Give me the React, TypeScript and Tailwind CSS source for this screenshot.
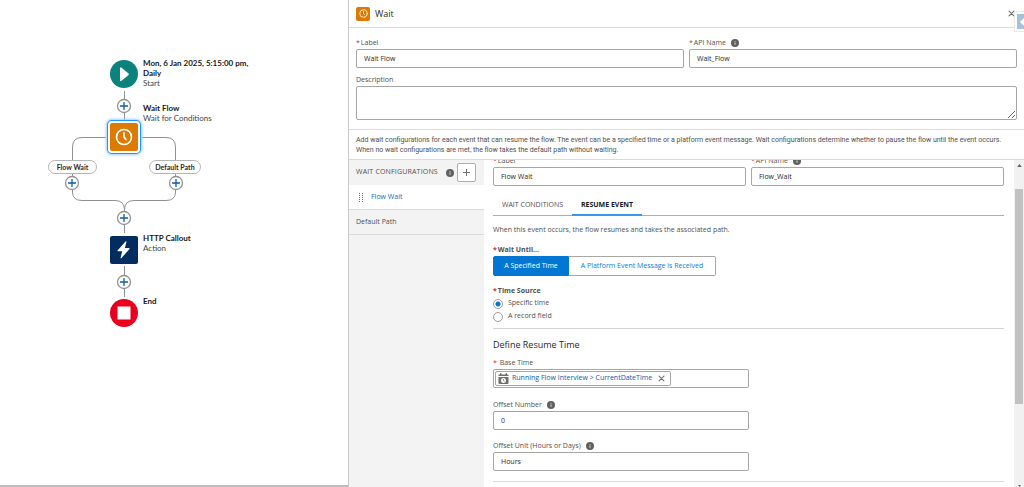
import { useState } from 'react'

interface FieldProps {
  id: string;
  label: string;
  value: string;
  required?: boolean;
  info?: boolean;
  className?: string;
}

const InfoIcon = () => (
  <svg viewBox="0 0 16 16" className="h-2 w-2 shrink-0" aria-hidden="true">
    <circle cx="8" cy="8" r="8" fill="#62605e" />
    <path d="M7.200 3.800h1.600v1.600H7.200zM7.200 7h1.600v4.600H7.200z" fill="#fff" />
  </svg>
)

const ClockIcon = ({ className }: { className: string }) => (
  <svg viewBox="0 0 24 24" className={className} fill="none" stroke="#fff" strokeWidth="2.2" strokeLinecap="round" strokeLinejoin="round" aria-hidden="true">
    <circle cx="12" cy="12" r="10" />
    <path d="M12 6.5V12l2.6 3.4" />
  </svg>
)

const CalendarIcon = () => (
  <svg viewBox="0 0 22 22" className="h-[11px] w-[11px] shrink-0" aria-hidden="true">
    <path d="M1 6V4.500q0-1.500 1.500-1.500H4V1.500Q4 0 5.500 0T7 1.500V3h8V1.500Q15 0 16.500 0T18 1.500V3h1.500Q21 3 21 4.500V6z" fill="#706e6b" />
    <path d="M1 8h20v12q0 2-2 2H3q-2 0-2-2z" fill="#706e6b" />
    <circle cx="11" cy="15" r="5" fill="#fff" />
    <path d="M11 12v3.200l2 1.400" stroke="#706e6b" strokeWidth="1.600" fill="none" />
  </svg>
)

const CloseIcon = ({ className }: { className: string }) => (
  <svg viewBox="0 0 10 10" className={className} stroke="#706e6b" strokeWidth="1.5" strokeLinecap="round" aria-hidden="true">
    <path d="M1.500 1.500l7 7M8.500 1.500l-7 7" />
  </svg>
)

const Required = () => <span className="mr-px text-[#c23934]">*</span>

const Field = ({ id, label, value, required, info, className = '' }: FieldProps) => (
  <div className={className}>
    <div className="flex h-3 items-center gap-[5px]">
      <label htmlFor={id} className="leading-3 text-[#514f4d]">
        {required && <Required />}
        {label}
      </label>
      {info && <InfoIcon />}
    </div>
    <input id={id} defaultValue={value} className="block h-[19px] w-full rounded-xs border border-[#a9a7a5] bg-white px-[7px] text-[#2b2826]" />
  </div>
)

const PLUS_NODES = [
  [124, 106],
  [72, 183],
  [176, 183],
  [124, 218],
  [124, 282],
]

const Canvas = () => (
  <section aria-label="Flow" className="relative w-[348px] shrink-0 overflow-hidden border-b-2 border-[#bdbdbd] bg-white font-['Lato',sans-serif]">
    <svg className="absolute top-0 left-0" width="260" height="340" fill="none" aria-hidden="true">
      <g stroke="#919191" strokeWidth="1">
        <path d="M124.500 91v32M106 137.500H82q-9.500 0-9.500 9.500V192q0 8.500 9.500 8.500H115q9.500 0 9.500 9.500V233" />
        <path d="M142 137.500h24q9.500 0 9.500 9.500V192q0 8.500-9.500 8.500H134q-9.500 0-9.500 9.500" />
        <path d="M124.500 266v31" />
      </g>
      {PLUS_NODES.map(([x, y]) => (
        <g key={`${x}-${y}`}>
          <circle cx={x} cy={y} r="6.500" fill="#fff" stroke="#919191" strokeWidth="1.300" />
          <path d={`M${x - 4} ${y}h8M${x} ${y - 4}v8`} stroke="#0b5cab" strokeWidth="1.300" />
        </g>
      ))}
      <circle cx="124" cy="74" r="14" fill="#0b827c" />
      <path d="M120 68v12.600q.3 1.100 1.300.5l7.200-6.100q.7-.7 0-1.400l-7.200-6.100q-1-.5-1.300.5z" fill="#fff" />
      <rect x="110" y="236" width="28" height="28" rx="2" fill="#032d60" />
      <path d="M125.500 241.500l-8 9q-.3.700.5.800h4.200l-1.700 6.600q.1.700.8.300l8.200-9.200q.4-.8-.5-.9h-4.100l1.600-6.300q-.2-.8-1-.3z" fill="#fff" />
      <circle cx="124" cy="313" r="14" fill="#ea001e" />
      <rect x="117.500" y="306.500" width="13" height="13" fill="#fff" />
    </svg>
    <button type="button" aria-label="Wait Flow" className="absolute top-[121px] left-[108px] flex h-8 w-8 items-center justify-center rounded-sm border-2 border-white bg-[#dd7a01] shadow-[0_0_0_1px_#1b96ff,0_0_3px_2px_#9ccdf8]">
      <ClockIcon className="h-[18px] w-[18px]" />
    </button>
    <div className="absolute top-[58px] left-[143px] w-28 text-[8px] leading-[10px]">
      <p className="font-bold text-[#181818]">Mon, 6 Jan 2025, 5:15:00 pm, Daily</p>
      <p className="text-[#444]">Start</p>
    </div>
    <div className="absolute top-[103px] left-[143px] text-[8px] leading-[10px]">
      <p className="font-bold text-[#181818]">Wait Flow</p>
      <p className="text-[#444]">Wait for Conditions</p>
    </div>
    <div className="absolute top-[233px] left-[143px] text-[8px] leading-[10px]">
      <p className="font-bold text-[#181818]">HTTP Callout</p>
      <p className="text-[#444]">Action</p>
    </div>
    <p className="absolute top-[296px] left-[143px] text-[8px] leading-[10px] font-bold text-[#181818]">End</p>
    <span className="absolute top-[160px] left-[48px] flex h-3.5 w-[49px] items-center justify-center rounded-full border border-[#b5b5b5] bg-white text-[7px] font-bold text-[#2b2826]">Flow Wait</span>
    <span className="absolute top-[160px] left-[149px] flex h-3.5 w-[52px] items-center justify-center rounded-full border border-[#b5b5b5] bg-white text-[7px] font-bold whitespace-nowrap text-[#2b2826]">Default Path</span>
  </section>
)

const ConfigList = () => (
  <nav aria-label="Wait configurations" className="w-[135px] shrink-0 bg-[#f3f3f3]">
    <div className="flex h-[25px] items-center gap-[3px] pl-[7px]">
      <h2 className="w-[87px] tracking-wide whitespace-nowrap uppercase">Wait Configurations</h2>
      <InfoIcon />
      <button type="button" aria-label="Add wait configuration" className="flex h-[19px] w-[19px] items-center justify-center rounded-xs border border-[#b0adab] bg-white">
        <svg viewBox="0 0 7 7" className="h-[7px] w-[7px]" stroke="#706e6b" aria-hidden="true">
          <path d="M3.500 0v7M0 3.500h7" />
        </svg>
      </button>
    </div>
    <a href="#flow-wait" className="flex h-[25px] items-center border-b border-[#dddbda] bg-white pl-2.5 text-[#0b6cbd]">
      <svg viewBox="0 0 5 9" className="mr-[7px] h-[9px] w-[5px]" fill="#706e6b" aria-hidden="true">
        {[0, 2, 4, 6, 8].map((y) => (
          <g key={y}>
            <rect x="0" y={y} width="1" height="1" />
            <rect x="3" y={y} width="1" height="1" />
          </g>
        ))}
      </svg>
      Flow Wait
    </a>
    <a href="#default-path" className="flex h-[25px] items-center border-b border-[#dddbda] pl-[7px]">Default Path</a>
  </nav>
)

const ResumeEvent = () => {
  const [source, setSource] = useState('time')

  return (
    <div className="min-w-0 flex-1 overflow-hidden bg-white pr-2.5 pl-[9px]">
      <div className="-mt-[5px] grid grid-cols-2 gap-[5px]">
        <Field id="config-label" label="Label" value="Flow Wait" required />
        <Field id="config-api" label="API Name" value="Flow_Wait" required info />
      </div>
      <div role="tablist" className="mt-2.5 flex h-5 border-b border-[#b0adab]">
        <button type="button" role="tab" aria-selected="false" className="w-[79px]">WAIT CONDITIONS</button>
        <button type="button" role="tab" aria-selected="true" className="-mb-px w-[70px] border-b-2 border-[#3b97ea] font-bold text-[#181818]">RESUME EVENT</button>
      </div>
      <p className="mt-2 leading-3">When this event occurs, the flow resumes and takes the associated path.</p>

      <p className="mt-2 leading-3 font-bold"><Required />Wait Until...</p>
      <div className="flex h-5">
        <button type="button" className="w-[76px] rounded-l-xs border border-[#0176d3] bg-[#0176d3] text-white">A Specified Time</button>
        <button type="button" className="w-[147px] rounded-r-xs border border-l-0 border-[#a9a7a5] bg-white text-[#0b7bdb]">A Platform Event Message is Received</button>
      </div>

      <fieldset className="mt-2">
        <legend className="leading-[13px] font-bold"><Required />Time Source</legend>
        {[['time', 'Specific time'], ['field', 'A record field']].map(([key, text]) => (
          <label key={key} className="flex h-[13px] items-center gap-[5px]">
            <input
              type="radio"
              name="source"
              checked={source === key}
              onChange={() => setSource(key)}
              className="h-2.5 w-2.5 appearance-none rounded-full border border-[#a09e9c] bg-white checked:bg-[radial-gradient(circle,#0176d3_2px,#fff_3px)]"
            />
            {text}
          </label>
        ))}
      </fieldset>

      <hr className="mt-[5px] border-[#d4d2d0]" />
      <h3 className="mt-2 text-[9px] leading-4 text-[#2b2826]">Define Resume Time</h3>
      <div className="mt-1">
        <label htmlFor="base-time" className="block h-3 leading-3"><Required /> Base Time</label>
        <div className="flex h-[19px] w-1/2 items-center rounded-xs border border-[#a9a7a5] px-px">
          <span className="flex h-[15px] shrink-0 items-center gap-[3px] rounded-xs border border-[#a9a7a5] px-[2px] whitespace-nowrap">
            <CalendarIcon />
            <a href="#current-date-time" className="text-[#0b5cab]">Running Flow Interview &gt; CurrentDateTime</a>
            <button type="button" aria-label="Remove" className="px-[3px]"><CloseIcon className="h-[7px] w-[7px]" /></button>
          </span>
          <input id="base-time" className="min-w-0 flex-1" />
        </div>
      </div>
      <Field id="offset-number" label="Offset Number" value="0" info className="mt-[11px] w-1/2" />
      <Field id="offset-unit" label="Offset Unit (Hours or Days)" value="Hours" info className="mt-2.5 w-1/2" />
      <hr className="mt-2.5 border-[#dddbda]" />
    </div>
  )
}

const ScrollRail = () => (
  <div className="flex w-2.5 shrink-0 flex-col items-center justify-between bg-[#f1f1f1] pt-1" aria-hidden="true">
    <svg viewBox="0 0 6 4" className="h-[3px] w-[5px]" fill="#606060"><path d="M3 0l3 4H0z" /></svg>
    <div className="mt-[22px] h-2/3 w-2 bg-[#c1c1c1]" />
    <div className="flex-1" />
    <svg viewBox="0 0 6 4" className="h-[2px] w-[5px]" fill="#606060"><path d="M0 0h6L3 4z" /></svg>
  </div>
)

const App = () => {
  return (
    <div className="flex h-screen overflow-hidden bg-white">
      <Canvas />
      <main className="flex min-w-0 flex-1 flex-col border-l border-[#c9c9c9] font-['Open_Sans',sans-serif] text-[7px] text-[#514f4d]">
        <header className="relative flex h-7 shrink-0 items-center border-b border-[#dddbda] pl-[7px]">
          <span className="flex h-3.5 w-3.5 items-center justify-center rounded-xs bg-[#dd7a01]">
            <ClockIcon className="h-[9px] w-[9px]" />
          </span>
          <h1 className="ml-[5px] text-[9px] text-[#2b2826]">Wait</h1>
          <button type="button" aria-label="Close" className="mr-[9px] ml-auto"><CloseIcon className="h-[7px] w-[7px]" /></button>
          <span className="absolute top-3.5 right-0 z-10 flex h-[15px] w-[7px] items-center justify-end bg-[#a9c0d8] shadow-[0_0_0_2px_#fff,0_0_0_3px_#e8e8e8]">
            <svg viewBox="0 0 4 8" className="h-2 w-1" fill="#fff" aria-hidden="true"><path d="M4 0v8L0 4z" /></svg>
          </span>
        </header>

        <div className="shrink-0 border-b border-[#dddbda] px-[7px] py-[9px]">
          <div className="grid grid-cols-2 gap-[5px]">
            <Field id="label" label="Label" value="Wait Flow" required />
            <Field id="api-name" label="API Name" value="Wait_Flow" required info />
          </div>
          <label htmlFor="description" className="mt-1.5 block leading-3">Description</label>
          <textarea id="description" className="block h-[34px] w-full rounded-xs border border-[#a9a7a5]" />
        </div>

        <p className="shrink-0 border-b border-[#dddbda] px-[7px] pt-[5px] pb-1 font-['Roboto',sans-serif] leading-[10px]">
          Add wait configurations for each event that can resume the flow. The event can be a specified time or a platform event message. Wait configurations determine whether to pause the flow until the event occurs. When no wait configurations are met, the flow takes the default path without waiting.
        </p>

        <div className="flex min-h-0 flex-1">
          <ConfigList />
          <ResumeEvent />
          <ScrollRail />
        </div>
      </main>
    </div>
  )
}

export default App
